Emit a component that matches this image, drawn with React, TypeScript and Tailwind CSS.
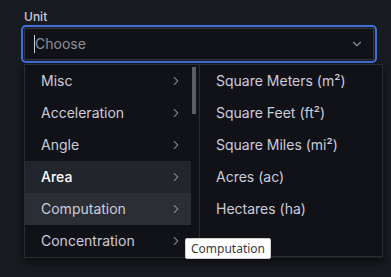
import { ChevronDown, ChevronRight } from "lucide-react";

const groups = ["Misc", "Acceleration", "Angle", "Area", "Computation", "Concentration"];
const units = [
  "Square Meters (m²)",
  "Square Feet (ft²)",
  "Square Miles (mi²)",
  "Acres (ac)",
  "Hectares (ha)",
];

export default function App() {
  return (
    <div className="relative h-[277px] w-[391px] overflow-hidden bg-[#181b1f] font-['Inter',sans-serif] text-[#ccccdc]">
      <div className="px-6 pt-[9px]">
        <div className="mb-[4px] text-xs font-medium leading-[15px] text-[#ccccdc]">Unit</div>
        <div className="flex h-8 w-[350px] items-center rounded-[2px] border border-[#ccccdc33] bg-[#111217] pr-[9px] pl-[9px] shadow-[0_0_0_1px_#181b1f,0_0_0_3px_#3d71d9]">
          <span className="h-[18px] w-px bg-[#ccccdc]" />
          <span className="flex-1 text-sm text-[#8e8f97]">Choose</span>
          <ChevronDown size={14} strokeWidth={2} className="text-[#8e8f97]" />
        </div>
      </div>

      <div className="ml-6 mt-[4px] flex w-fit shadow-[0_4px_8px_rgba(0,0,0,0.6)]">
        <div className="flex w-[175px] border border-r-0 border-[#ccccdc26] bg-[#111217]">
          <div className="flex w-[166px] flex-col">
            {groups.map((g) => (
              <div
                key={g}
                className={`flex h-8 items-center justify-between pl-4 pr-[8px] text-sm ${
                  g === "Area"
                    ? "bg-[#22252b] font-medium text-white"
                    : g === "Computation"
                      ? "bg-[#2b2e34]"
                      : ""
                }`}
              >
                <span>{g}</span>
                <ChevronRight size={14} strokeWidth={1.75} className="text-[#9fa1a8]" />
              </div>
            ))}
          </div>
          <div className="pt-[1px]">
            <div className="h-[49px] w-[6px] rounded-[1px] border border-[#111217] bg-[#5b5e66]" />
          </div>
        </div>
        <div className="flex h-[193px] w-[184px] flex-col border border-[#ccccdc26] bg-[#111217]">
          {units.map((u) => (
            <div key={u} className="flex h-8 items-center pl-4 text-sm">
              {u}
            </div>
          ))}
        </div>
      </div>

      <div className="absolute left-[185px] top-[238px] rounded-[2px] border border-[#d0d0d0] bg-white px-[5px] py-[2px] font-['Noto_Sans',sans-serif] text-xs leading-[15px] text-[#3a3a3a]">
        Computation
      </div>
    </div>
  );
}
